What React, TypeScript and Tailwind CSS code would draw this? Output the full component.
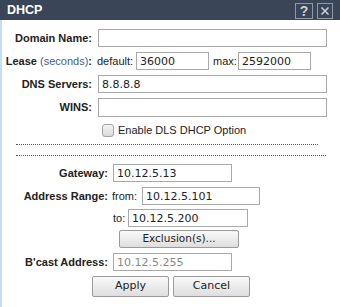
const label = "font-['Liberation_Sans',Arial,sans-serif] text-[11px] font-bold text-[#222]";
const inputCls =
  "h-[18px] border border-[#a9a9a9] bg-white px-[3px] font-['DejaVu_Sans',Verdana,sans-serif] text-[11px] text-[#222] outline-none";
const small = "font-['Liberation_Sans',Arial,sans-serif] text-[11px] text-[#222]";
const btn =
  "h-full rounded-[2px] border border-[#9a9a9a] bg-gradient-to-b from-[#fafafa] to-[#dedede] font-['DejaVu_Sans',Verdana,sans-serif] text-[10.5px] text-[#222]";

export default function App() {
  return (
    <div className="w-[340px] h-[307px] overflow-hidden bg-white">
      {/* title bar */}
      <div className="h-[20px] bg-[#3a4557] flex items-center pl-[7px] pr-[7px]">
        <span className="font-['Liberation_Sans',Arial,sans-serif] text-[12.5px] font-bold text-white">DHCP</span>
        <div className="ml-auto flex gap-[4px] mt-[1px]">
          <button className="w-[18px] h-[16px] border border-[#8f98a6] flex items-center justify-center">
            <span className="font-['Liberation_Sans',Arial,sans-serif] text-[14px] font-bold leading-none text-[#c9ced6]">?</span>
          </button>
          <button className="w-[16px] h-[16px] border border-[#8f98a6] flex items-center justify-center">
            <svg width="10" height="10" viewBox="0 0 10 10">
              <path d="M1.5 1.5 L8.5 8.5 M8.5 1.5 L1.5 8.5" stroke="#c9ced6" strokeWidth="1.6" />
            </svg>
          </button>
        </div>
      </div>

      <div className="h-[287px] border-l-2 border-[#c6dbf5] flex flex-col">
        <div className="mt-[9px] flex items-center h-[18px]">
          <span className={`${label} w-[90px] text-right`}>Domain Name:</span>
          <input className={`${inputCls} ml-[6px] w-[229px]`} defaultValue="" />
        </div>

        <div className="mt-[5px] flex items-center h-[18px]">
          <span className={`${label} w-[90px] text-right whitespace-nowrap`}>
            Lease <span className="font-normal text-[#4b5c8e]">(seconds)</span>:
          </span>
          <span className={`${small} ml-[5px] w-[39px]`}>default:</span>
          <input className={`${inputCls} w-[73px]`} defaultValue="36000" />
          <span className={`${small} ml-[4px] w-[25px]`}>max:</span>
          <input className={`${inputCls} w-[73px]`} defaultValue="2592000" />
        </div>

        <div className="mt-[5px] flex items-center h-[18px]">
          <span className={`${label} w-[90px] text-right`}>DNS Servers:</span>
          <input className={`${inputCls} ml-[6px] w-[229px]`} defaultValue="8.8.8.8" />
        </div>

        <div className="mt-[5px] flex items-center h-[19px]">
          <span className={`${label} w-[90px] text-right`}>WINS:</span>
          <input className={`${inputCls} ml-[6px] w-[229px] h-[19px]`} defaultValue="" />
        </div>

        <div className="mt-[7px] flex items-center h-[13px]">
          <span className="ml-[100px] w-[12px] h-[13px] rounded-[3px] border border-[#a3a3a3] bg-gradient-to-b from-[#f4f4f4] to-[#dadada]" />
          <span className={`${small} ml-[4px]`}>Enable DLS DHCP Option</span>
        </div>

        <div className="mt-[7px] ml-[14px] w-[302px] border-t border-dotted border-[#555]" />
        <div className="mt-[10px] ml-[14px] w-[310px] border-t border-dotted border-[#555]" />

        <div className="mt-[8px] flex items-center h-[18px]">
          <span className={`${label} w-[106px] text-right`}>Gateway:</span>
          <input className={`${inputCls} ml-[5px] w-[119px]`} defaultValue="10.12.5.13" />
        </div>

        <div className="mt-[5px] flex items-center h-[18px]">
          <span className={`${label} w-[106px] text-right`}>Address Range:</span>
          <span className={`${small} ml-[4px] w-[30px] text-[#2e2238]`}>from:</span>
          <input className={`${inputCls} w-[118px]`} defaultValue="10.12.5.101" />
        </div>

        <div className="mt-[4px] flex items-center h-[18px]">
          <span className={`${small} ml-[111px] w-[15px] text-[#2e2238]`}>to:</span>
          <input className={`${inputCls} w-[120px]`} defaultValue="10.12.5.200" />
        </div>

        <div className="mt-[3px] flex h-[18px]">
          <button className={`${btn} ml-[117px] w-[120px]`}>Exclusion(s)...</button>
        </div>

        <div className="mt-[5px] flex items-center h-[18px]">
          <span className={`${label} w-[106px] text-right`}>B'cast Address:</span>
          <input
            className={`${inputCls} ml-[5px] w-[119px] bg-[#f0f0f0] text-[#888]`}
            defaultValue="10.12.5.255"
            disabled
          />
        </div>

        <div className="mt-[5px] flex h-[21px] gap-[4px]">
          <button className={`${btn} ml-[90px] w-[77px] text-[11px]`}>Apply</button>
          <button className={`${btn} w-[77px] text-[11px]`}>Cancel</button>
        </div>
      </div>
    </div>
  );
}
